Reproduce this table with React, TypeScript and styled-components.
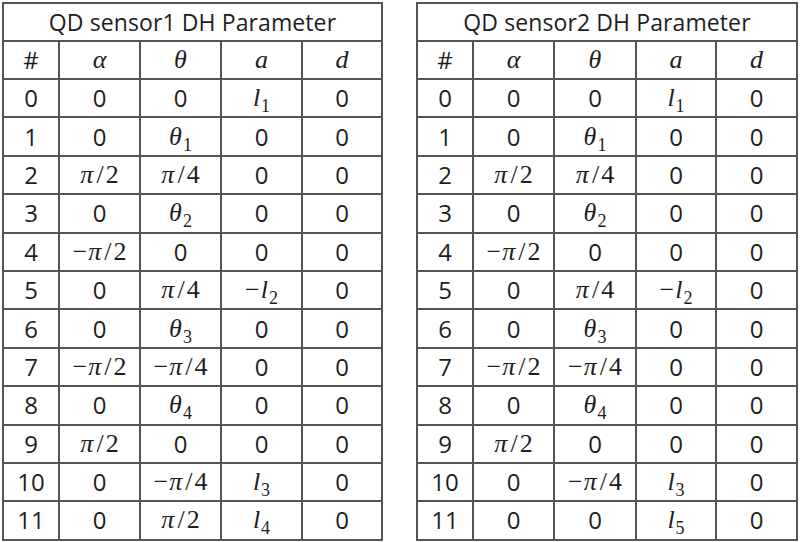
import React from "react";
import styled, { createGlobalStyle } from "styled-components";

const Global = createGlobalStyle`
  html, body { margin: 0; padding: 0; background: #fff; }
  body { font-family: "Open Sans", "Noto Sans CJK KR", sans-serif; color: #1e1e1e; }
`;

const Page = styled.div`
  display: flex;
  align-items: flex-start;
  gap: 33px;
  padding: 2px 0 0 2px;
  width: 800px;
  height: 542px;
  box-sizing: border-box;
  overflow: hidden;
`;

const Grid = styled.div<{ $cols: string }>`
  display: grid;
  grid-template-columns: ${(p) => p.$cols};
  grid-template-rows: 36px 36px repeat(12, 36.4px);
  gap: 2px;
  padding: 2px;
  background: #555;
`;

const Title = styled.div`
  grid-column: 1 / -1;
  background: #fff;
  display: flex;
  align-items: center;
  justify-content: center;
  font-size: 23px;
  letter-spacing: 0.1px;
`;

const Cell = styled.div`
  background: #fff;
  display: flex;
  align-items: center;
  justify-content: center;
  font-size: 24px;
  line-height: 1;
`;

const MathText = styled.span`
  font-family: "Liberation Serif", "DejaVu Serif", serif;
  font-size: 26px;
  line-height: 1;
  white-space: nowrap;
`;

const Mi = styled.span`
  font-style: italic;
`;

const Slash = styled.span`
  margin: 0 2px 0 3px;
`;

const Minus = styled.span`
  margin-right: 1px;
`;

const Sub = styled.span`
  font-size: 18px;
  position: relative;
  top: 6px;
  margin-left: 1px;
`;

type Val = string;

const renderVal = (v: Val, key: number) => {
  const m = v.match(/^(-?)(pi|theta|l)(?:_(\d))?(?:\/(\d))?$/);
  if (m) {
    const neg = m[1] === "-";
    const sym = m[2] === "pi" ? "π" : m[2] === "theta" ? "θ" : "l";
    return (
      <Cell key={key}>
        <MathText>
          {neg && <Minus>−</Minus>}
          <Mi>{sym}</Mi>
          {m[3] && <Sub>{m[3]}</Sub>}
          {m[4] && (
            <>
              <Slash>/</Slash>
              {m[4]}
            </>
          )}
        </MathText>
      </Cell>
    );
  }
  return <Cell key={key}>{v}</Cell>;
};

const rows1: Val[][] = [
  ["0", "0", "0", "l_1", "0"],
  ["1", "0", "theta_1", "0", "0"],
  ["2", "pi/2", "pi/4", "0", "0"],
  ["3", "0", "theta_2", "0", "0"],
  ["4", "-pi/2", "0", "0", "0"],
  ["5", "0", "pi/4", "-l_2", "0"],
  ["6", "0", "theta_3", "0", "0"],
  ["7", "-pi/2", "-pi/4", "0", "0"],
  ["8", "0", "theta_4", "0", "0"],
  ["9", "pi/2", "0", "0", "0"],
  ["10", "0", "-pi/4", "l_3", "0"],
  ["11", "0", "pi/2", "l_4", "0"],
];

const rows2: Val[][] = rows1.map((r, i) =>
  i === 11 ? ["11", "0", "0", "l_5", "0"] : r
);

const Header = () => (
  <>
    <Cell>#</Cell>
    <Cell><MathText><Mi>α</Mi></MathText></Cell>
    <Cell><MathText><Mi>θ</Mi></MathText></Cell>
    <Cell><MathText><Mi>a</Mi></MathText></Cell>
    <Cell><MathText><Mi>d</Mi></MathText></Cell>
  </>
);

const DHTable = ({ title, rows, cols }: { title: string; rows: Val[][]; cols: string }) => (
  <Grid $cols={cols}>
    <Title>{title}</Title>
    <Header />
    {rows.map((r, i) => (
      <React.Fragment key={i}>{r.map((v, j) => renderVal(v, j))}</React.Fragment>
    ))}
  </Grid>
);

export default function App() {
  return (
    <>
      <Global />
      <Page>
        <DHTable title="QD sensor1 DH Parameter" rows={rows1} cols="54px 79px 79px 79px 78px" />
        <DHTable title="QD sensor2 DH Parameter" rows={rows2} cols="54px 79px 80px 78px 79px" />
      </Page>
    </>
  );
}
